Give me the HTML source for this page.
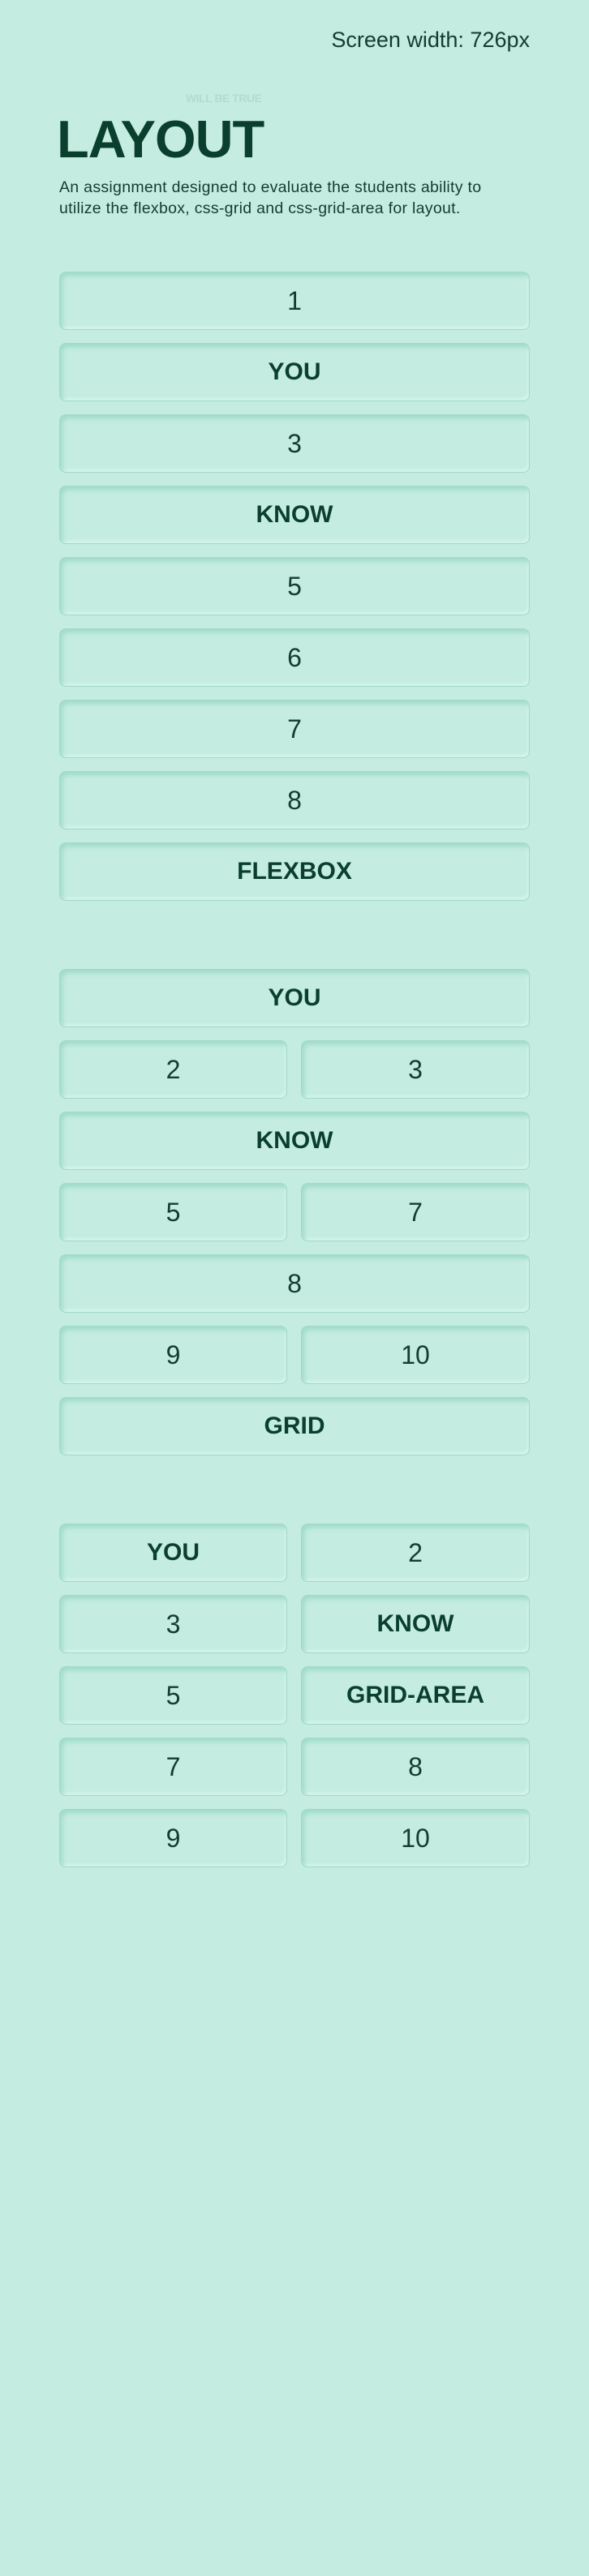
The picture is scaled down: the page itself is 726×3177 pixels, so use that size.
<!DOCTYPE html>
<html><head><style>
*{margin:0;padding:0;box-sizing:border-box}
body{width:726px;height:3177px;background:#c5ece0;font-family:"Liberation Sans",sans-serif;color:#0c3f2f;position:relative;overflow:hidden}
.sw{position:absolute;right:73px;top:34px;font-size:27px;color:#123d30}
.wb{position:absolute;left:229px;top:113px;font-size:14px;font-weight:bold;color:#b3dccf;letter-spacing:-0.5px}
h1{position:absolute;left:70px;top:134px;font-size:65px;font-weight:bold;letter-spacing:-1px;color:#0a3f2e}
p{position:absolute;left:73px;top:218px;width:575px;font-size:19.5px;line-height:26px;letter-spacing:0.3px;color:#123d30}
.b{position:absolute;height:72px;border-radius:8px;background:#c4ece0;border:1px solid #a2d9c6;box-shadow:inset 3px 4px 6px #9fdcc8,inset -2px -3px 3px #d5f5ea;display:flex;align-items:center;justify-content:center;font-size:32px;font-weight:300;color:#123d30}
.w{font-weight:bold;font-size:30px;color:#0a3f2e}
.f{left:73px;width:580px}.l{left:73px;width:281px}.r{left:371px;width:282px}
</style></head><body>
<div class="sw">Screen width: 726px</div>
<div class="wb">WILL BE TRUE</div>
<h1>LAYOUT</h1>
<p>An assignment designed to evaluate the students ability to utilize the flexbox, css-grid and css-grid-area for layout.</p>

<div class="b f" style="top:335px">1</div>
<div class="b f w" style="top:423px">YOU</div>
<div class="b f" style="top:511px">3</div>
<div class="b f w" style="top:599px">KNOW</div>
<div class="b f" style="top:687px">5</div>
<div class="b f" style="top:775px">6</div>
<div class="b f" style="top:863px">7</div>
<div class="b f" style="top:951px">8</div>
<div class="b f w" style="top:1039px">FLEXBOX</div>

<div class="b f w" style="top:1195px">YOU</div>
<div class="b l" style="top:1283px">2</div>
<div class="b r" style="top:1283px">3</div>
<div class="b f w" style="top:1371px">KNOW</div>
<div class="b l" style="top:1459px">5</div>
<div class="b r" style="top:1459px">7</div>
<div class="b f" style="top:1547px">8</div>
<div class="b l" style="top:1635px">9</div>
<div class="b r" style="top:1635px">10</div>
<div class="b f w" style="top:1723px">GRID</div>

<div class="b l w" style="top:1879px">YOU</div>
<div class="b r" style="top:1879px">2</div>
<div class="b l" style="top:1967px">3</div>
<div class="b r w" style="top:1967px">KNOW</div>
<div class="b l" style="top:2055px">5</div>
<div class="b r w" style="top:2055px">GRID-AREA</div>
<div class="b l" style="top:2143px">7</div>
<div class="b r" style="top:2143px">8</div>
<div class="b l" style="top:2231px">9</div>
<div class="b r" style="top:2231px">10</div>
</body></html>
